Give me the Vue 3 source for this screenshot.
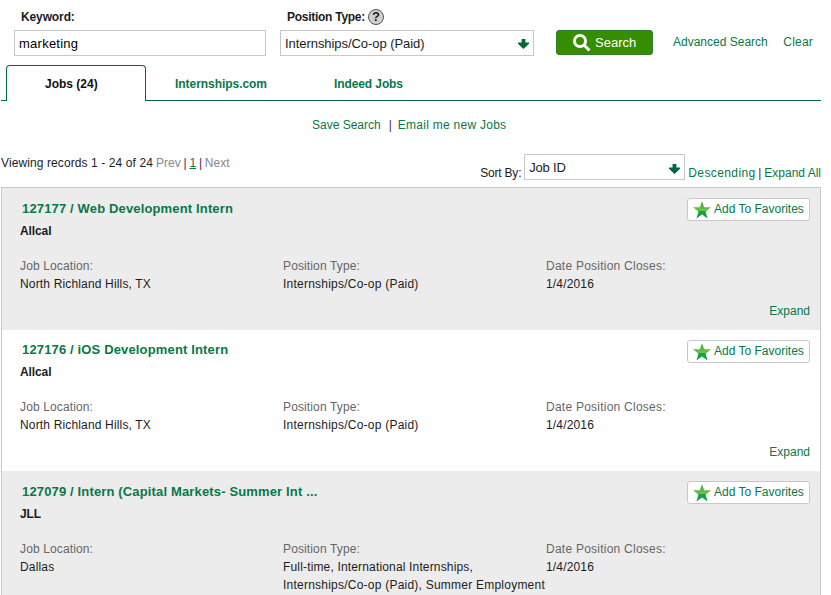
<script setup>
const jobs = [
  { title: '127177 / Web Development Intern', company: 'Allcal', place: 'North Richland Hills, TX', types: ['Internships/Co-op (Paid)'], closes: '1/4/2016' },
  { title: '127176 / iOS Development Intern', company: 'Allcal', place: 'North Richland Hills, TX', types: ['Internships/Co-op (Paid)'], closes: '1/4/2016' },
  { title: '127079 / Intern (Capital Markets- Summer Int ...', company: 'JLL', place: 'Dallas', types: ['Full-time, International Internships,', 'Internships/Co-op (Paid), Summer Employment'], closes: '1/4/2016' },
]
</script>

<template>
  <main class="page">
    <form class="search" @submit.prevent>
      <div class="field keyword">
        <label class="label"><span class="t-keyword">Keyword:</span></label>
        <div class="box"><span class="t-marketing">marketing</span></div>
      </div>
      <div class="field position">
        <label class="label"><span class="t-ptype">Position Type:</span>
          <span class="help">?</span>
        </label>
        <div class="box">
          <span class="t-paid">Internships/Co-op (Paid)</span>
          <svg class="arrow" viewBox="0 0 11 10"><path d="M3.600 0h3.800v3.500H11v1.200L5.500 10 0 4.700V3.500h3.600z" /></svg>
        </div>
      </div>
      <button class="go">
        <svg class="lens" viewBox="0 0 18 18"><circle cx="7" cy="7" r="5.5" /><path d="M11 11l5.500 5.500" /></svg>
        <span>Search</span>
      </button>
      <a class="adv">Advanced Search</a>
      <a class="clear">Clear</a>
    </form>

    <nav class="tabs">
      <a class="tab active">Jobs (24)</a>
      <a class="tab second">Internships.com</a>
      <a class="tab third">Indeed Jobs</a>
    </nav>

    <div class="actions">
      <a>Save Search</a><i class="bar">|</i><a class="t-email">Email me new Jobs</a>
    </div>

    <div class="toolbar">
      <div class="records">
        <span class="t-view">Viewing records 1 - 24 of 24</span>
        <span class="muted prev">Prev</span><i class="bar">|</i><a class="current">1</a><i class="bar">|</i><span class="muted">Next</span>
      </div>
      <div class="sort">
        <span class="sortby">Sort By:</span>
        <div class="box">
          <span class="t-jobid">Job ID</span>
          <svg class="arrow" viewBox="0 0 11 10"><path d="M3.600 0h3.800v3.500H11v1.200L5.500 10 0 4.700V3.500h3.600z" /></svg>
        </div>
        <div class="order"><a class="t-desc">Descending</a><i class="bar">|</i><a>Expand All</a></div>
      </div>
    </div>

    <section class="list">
      <article v-for="job in jobs" :key="job.title" class="job">
        <div class="head">
          <div>
            <h2>{{ job.title }}</h2>
            <p class="company">{{ job.company }}</p>
          </div>
          <button class="fav">
            <svg viewBox="0 0 18 18" class="star">
              <defs>
                <linearGradient id="leaf" x1="0" y1="0" x2="0" y2="1">
                  <stop offset="0" stop-color="#3fa648" /><stop offset=".54" stop-color="#72c043" />
                  <stop offset=".56" stop-color="#17a04a" /><stop offset="1" stop-color="#17a04a" />
                </linearGradient>
              </defs>
              <path fill="url(#leaf)" d="M9 .3l2.200 6H18l-5.400 4.400 2 6.700L9 13.500l-5.600 3.900 2-6.700L0 6.300h6.800z" />
            </svg>
            <span class="t-fav">Add To Favorites</span>
          </button>
        </div>
        <div class="facts">
          <dl><dt>Job Location:</dt><dd>{{ job.place }}</dd></dl>
          <dl class="types"><dt>Position Type:</dt><dd v-for="type in job.types" :key="type">{{ type }}</dd></dl>
          <dl class="closes"><dt>Date Position Closes:</dt><dd>{{ job.closes }}</dd></dl>
        </div>
        <a v-if="job.types.length === 1" class="expand">Expand</a>
      </article>
    </section>
  </main>
</template>

<style>
body { background: #fff; }
</style>

<style scoped>
.page { box-sizing: border-box; width: 821px; height: 595px; overflow: hidden; padding-left: 1px; font: 12px/18px "Liberation Sans", Arial, sans-serif; color: #1c1c1c; white-space: nowrap; }
a { color: #087848; }
.bar { font-style: normal; color: #602050; }
.search { display: flex; height: 65px; }
.field { padding-top: 8px; }
.keyword { width: 252px; margin-left: 13px; }
.position { width: 254px; margin-left: 14px; }
.label { display: flex; align-items: center; height: 18px; margin: 0 0 4px 7px; font-weight: bold; }
.t-keyword { letter-spacing: -.12px; }
.t-ptype { letter-spacing: -.27px; }
.help { box-sizing: border-box; width: 16px; height: 16px; margin-left: 3px; border: 1.500px solid #555; border-radius: 50%; background: #d0d0d0; color: #222; font-size: 13px; line-height: 13px; text-align: center; }
.box { box-sizing: border-box; display: flex; align-items: center; justify-content: space-between; height: 26px; padding: 1px 4px 0 4px; border: 1px solid #c8c8c8; background: #fff; font-size: 13px; }
.t-marketing { color: #000; letter-spacing: .25px; }
.t-paid { letter-spacing: -.06px; }
.t-jobid { letter-spacing: -.2px; }
.arrow { width: 11px; height: 10px; margin-top: 1px; fill: #006838; }
.go { box-sizing: border-box; display: flex; align-items: center; width: 97px; height: 25px; margin: 30px 0 0 22px; padding: 0 0 0 16px; border: 1px solid #2c8030; border-radius: 3px; background: #378d00; color: #fff; font: 13px/18px "Liberation Sans", Arial, sans-serif; }
.lens { width: 18px; height: 18px; margin-right: 4px; fill: none; stroke: #fff; stroke-width: 3; }
.adv { margin: 33px 0 0 20px; }
.clear { margin: 33px 0 0 auto; padding-right: 8px; letter-spacing: .2px; }
.tabs { display: flex; height: 36px; box-sizing: border-box; border-bottom: 1px solid #006b3f; font-weight: bold; }
.tab { line-height: 38px; }
.active { box-sizing: border-box; width: 140px; height: 36px; margin-left: 5px; padding-left: 38px; border: 1px solid #006b3f; border-bottom: 0; border-radius: 4px 4px 0 0; background: #fff; color: #111; line-height: 36px; }
.second { margin-left: 29px; width: 159px; letter-spacing: -.05px; }
.third { letter-spacing: -.1px; }
.actions { display: flex; height: 18px; margin: 15px 0 0 311px; }
.actions .bar { width: 3px; margin: 0 6px 0 8px; }
.t-email { letter-spacing: .27px; }
.toolbar { display: flex; justify-content: space-between; height: 53px; }
.records { display: flex; padding-top: 20px; }
.t-view { letter-spacing: .1px; }
.prev { margin-left: 3px; }
.muted { color: #888; }
.records .bar { margin: 0 2.800px; }
.current { text-decoration: underline; }
.sort { display: flex; padding-top: 20px; }
.sortby { margin: 10px 3px 0 0; letter-spacing: -.2px; }
.sort .box { width: 161px; padding: 2px 4px 0 4px; }
.sort .arrow { margin-top: 1px; }
.order { display: flex; margin: 10px 0 0 3px; }
.order .bar { margin: 0 3px 0 2.500px; }
.t-desc { letter-spacing: .4px; }
.list { box-sizing: border-box; border: 1px solid #c8c8c8; border-bottom: 0; }
.job { box-sizing: border-box; min-height: 141.500px; padding: 10px 10px 0 18px; background: #fff; }
.job:nth-child(odd) { background: #ececec; }
.head { display: flex; justify-content: space-between; height: 58.500px; }
h2 { margin: 1.800px 0 0 2px; font-size: 13px; line-height: 18px; color: #087848; letter-spacing: .15px; }
.company { margin: 4px 0 0; font-weight: bold; letter-spacing: -.1px; }
.fav { box-sizing: border-box; display: flex; width: 123px; height: 23px; padding: 2px 0 0 5px; border: 1px solid #c8c8c8; border-radius: 3px; background: #fff; color: #087848; font: 12px/18px "Liberation Sans", Arial, sans-serif; }
.star { width: 18px; height: 18px; margin: 0 3px 0 0; }
.t-fav { margin-top: -1px; }
.facts { display: flex; min-height: 45px; }
dl { margin: 0; width: 263px; flex: none; }
.types { padding-bottom: 9px; }
dt { color: #666; letter-spacing: .13px; }
dd { margin: 0; letter-spacing: .16px; }
.types dd { letter-spacing: .23px; }
.types dd:not(:last-child) { letter-spacing: .16px; }
.closes dt { letter-spacing: .24px; }
.expand { display: block; text-align: right; }
</style>
